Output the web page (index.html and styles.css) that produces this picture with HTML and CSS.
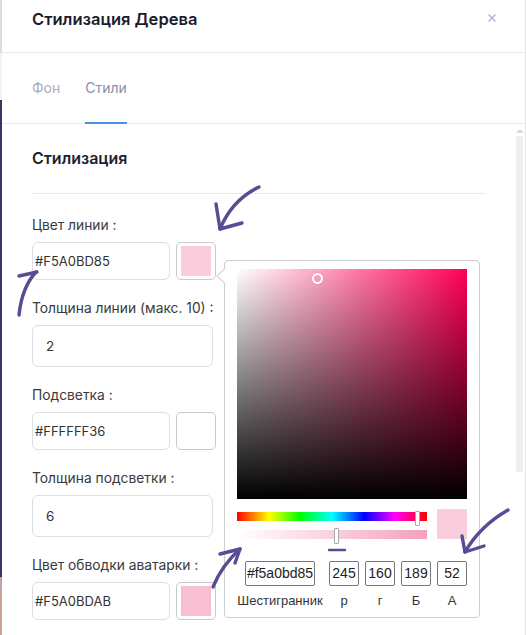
FILE: index.html
```html
<!DOCTYPE html>
<html lang="ru">
<head>
<meta charset="utf-8">
<title>Стилизация Дерева</title>
<link rel="stylesheet" href="styles.css">
</head>
<body>
<div class="page">
  <div class="edge">
    <div class="edge-top"></div>
    <div class="edge-gap"></div>
    <div class="edge-dark"></div>
    <div class="edge-bottom"></div>
  </div>
  <section class="panel">
    <header class="panel-header">
      <h1 class="panel-title">Стилизация Дерева</h1>
      <button class="close" aria-label="Закрыть">
        <svg width="8" height="8" viewBox="0 0 8 8"><path d="M0.5 0.5 L7.5 7.5 M7.5 0.5 L0.5 7.5" stroke="#a9abc8" stroke-width="1.1" fill="none"/></svg>
      </button>
    </header>
    <nav class="tabs">
      <span class="tab">Фон</span>
      <span class="tab tab-active">Стили</span>
    </nav>
    <div class="body">
      <div class="content">
        <h2 class="section-title">Стилизация</h2>
        <div class="divider"></div>

        <div class="field">
          <label class="field-label">Цвет линии :</label>
          <div class="color-row">
            <div class="text-input color-text">#F5A0BD85</div>
            <div class="swatch"><span class="swatch-fill fill-line"></span></div>

            <div class="picker">
              <div class="sat">
                <span class="sat-cursor"></span>
              </div>
              <div class="controls">
                <div class="sliders">
                  <div class="slider hue"><span class="handle hue-handle"></span></div>
                  <div class="slider alpha"><span class="handle alpha-handle"></span></div>
                </div>
                <div class="preview"></div>
              </div>
              <div class="values">
                <div class="val val-hex"><div class="val-input">#f5a0bd85</div><div class="val-label">Шестигранник</div></div>
                <div class="val"><div class="val-input">245</div><div class="val-label">р</div></div>
                <div class="val"><div class="val-input">160</div><div class="val-label">г</div></div>
                <div class="val"><div class="val-input">189</div><div class="val-label">Б</div></div>
                <div class="val"><div class="val-input">52</div><div class="val-label">А</div></div>
              </div>
            </div>
          </div>
        </div>

        <div class="field">
          <label class="field-label">Толщина линии (макс. 10) :</label>
          <div class="text-input num-input">2</div>
        </div>

        <div class="field">
          <label class="field-label">Подсветка :</label>
          <div class="color-row">
            <div class="text-input color-text">#FFFFFF36</div>
            <div class="swatch"><span class="swatch-fill fill-glow"></span></div>
          </div>
        </div>

        <div class="field">
          <label class="field-label">Толщина подсветки :</label>
          <div class="text-input num-input">6</div>
        </div>

        <div class="field">
          <label class="field-label">Цвет обводки аватарки :</label>
          <div class="color-row">
            <div class="text-input color-text">#F5A0BDAB</div>
            <div class="swatch"><span class="swatch-fill fill-avatar"></span></div>
          </div>
        </div>
      </div>
      <div class="scrollbar">
        <span class="scroll-up"></span>
        <span class="scroll-track"></span>
      </div>
    </div>
  </section>

  <svg class="annotations" width="526" height="635" viewBox="0 0 526 635">
    <g fill="none" stroke="#5b4b94" stroke-width="3.4" stroke-linecap="round" stroke-linejoin="round">
      <path d="M259 187 Q232 200 220 229"/>
      <path d="M216 204 L220 229 L242 223"/>
      <path d="M19 315 Q22 287 36 272"/>
      <path d="M19 276 L37 272"/>
      <path d="M213 587 Q222 565 240 549"/>
      <path d="M220 554 L240 549 L235 563"/>
      <path d="M508 510 Q480 526 465 552"/>
      <path d="M462 536 L465 552 L484 546"/>
      <path d="M329 550 L345 550" stroke-width="2.4"/>
    </g>
  </svg>
</div>
</body>
</html>
```

FILE: styles.css
```css
* { box-sizing: border-box; }

html, body {
  margin: 0;
  padding: 0;
}

body {
  width: 526px;
  height: 635px;
  overflow: hidden;
  background: #fff;
  font-family: Inter, "Noto Sans", sans-serif;
  color: #333;
}

.page {
  position: relative;
  display: flex;
  width: 526px;
  height: 635px;
}

/* window edge behind the panel */
.edge {
  width: 2px;
  flex-shrink: 0;
  display: flex;
  flex-direction: column;
}
.edge-top { height: 53px; background: #dcdcdc; }
.edge-gap { height: 47px; background: #f3f3f3; }
.edge-dark { height: 477px; background: #3b3366; }
.edge-bottom { flex: 1; background: #c8a29c; }

.panel {
  flex: 1;
  min-width: 0;
  display: flex;
  flex-direction: column;
  border-right: 1px solid #e4e4e4;
}

.panel-header {
  height: 53px;
  flex-shrink: 0;
  border-bottom: 1px solid #ebebeb;
  display: flex;
  align-items: flex-start;
  justify-content: space-between;
  padding: 8px 29px 0 30px;
}

.panel-title {
  margin: 0;
  font-size: 16.5px;
  line-height: 22px;
  font-weight: 600;
  color: #1b1b2b;
}

.close {
  border: 0;
  background: none;
  padding: 0;
  margin-top: 6px;
  width: 8px;
  height: 8px;
  display: block;
}
.close svg { display: block; }

.tabs {
  height: 71px;
  flex-shrink: 0;
  border-bottom: 1px solid #ebebeb;
  display: flex;
  gap: 25px;
  padding-left: 30px;
}

.tab {
  display: flex;
  align-items: center;
  margin-bottom: -1px;
  border-bottom: 2px solid transparent;
  font-size: 14px;
  color: #a9abc0;
}

.tab-active {
  color: #8a8ea9;
  border-bottom-color: #4d8fe6;
}

.body {
  flex: 1;
  min-height: 0;
  display: flex;
}

.content {
  flex: 1;
  min-width: 0;
  padding: 24px 31px 0 30px;
}

.section-title {
  margin: 0;
  font-size: 16px;
  line-height: 20px;
  font-weight: 600;
  color: #1f1f2f;
}

.divider {
  height: 1px;
  background: #e8e8ec;
  margin: 25px 0 22px;
}

.field + .field { margin-top: 19px; }

.field-label {
  display: block;
  font-size: 13.8px;
  line-height: 18px;
  color: #3a3a3a;
  margin-bottom: 8px;
}

.text-input {
  border: 1px solid #dcdde6;
  border-radius: 6px;
  background: #fff;
  display: flex;
  align-items: center;
  font-size: 13px;
  color: #333;
}

.color-row {
  position: relative;
  display: flex;
  gap: 6px;
}

.color-text {
  width: 138px;
  height: 38px;
  padding-left: 2px;
}

.num-input {
  width: 181px;
  height: 42px;
  padding-left: 13px;
  font-size: 13.5px;
}

.swatch {
  width: 40px;
  height: 38px;
  border: 1px solid #c9c9c9;
  border-radius: 5px;
  padding: 3px 4px;
  background: #fff;
}

.swatch-fill {
  display: block;
  width: 100%;
  height: 100%;
}

.fill-line { background: rgba(245, 160, 189, 0.52); }
.fill-glow { background: rgba(255, 255, 255, 0.21); }
.fill-avatar { background: rgba(245, 160, 189, 0.67); }

/* colour picker popover */
.picker {
  position: absolute;
  left: 192px;
  top: 18px;
  width: 256px;
  z-index: 2;
  background: #fff;
  border: 1px solid #cfcfcf;
  border-radius: 4px;
  padding: 8px 12px;
  font-family: "Liberation Sans", Arial, sans-serif;
}

.picker::before {
  content: "";
  position: absolute;
  left: -6px;
  top: 9px;
  width: 11px;
  height: 11px;
  background: #fff;
  border-left: 1px solid #cfcfcf;
  border-bottom: 1px solid #cfcfcf;
  transform: rotate(45deg);
}

.sat {
  position: relative;
  width: 230px;
  height: 230px;
  background:
    linear-gradient(to top, #000, rgba(0, 0, 0, 0)),
    linear-gradient(to right, #fff, hsl(340, 100%, 50%));
}

.sat-cursor {
  position: absolute;
  left: 75px;
  top: 4px;
  width: 11px;
  height: 11px;
  border: 2px solid #fff;
  border-radius: 50%;
  box-shadow: 0 0 1px rgba(0, 0, 0, 0.3);
}

.controls {
  display: flex;
  gap: 10px;
  margin-top: 10px;
  height: 30px;
}

.sliders {
  width: 190px;
  padding-top: 3px;
  display: flex;
  flex-direction: column;
  gap: 9px;
}

.slider {
  position: relative;
  height: 12px;
}

.hue {
  background: linear-gradient(to right, #f00 0%, #ff0 17%, #0f0 33%, #0ff 50%, #00f 67%, #f0f 83%, #f00 100%);
}

.alpha {
  background: linear-gradient(to right, rgba(245, 160, 189, 0), rgba(245, 160, 189, 1));
}

.handle {
  position: absolute;
  width: 5px;
  background: #fff;
  border: 1px solid #a8a8a8;
  border-radius: 1px;
}

.hue-handle { left: 178px; top: -1px; height: 15px; }
.alpha-handle { left: 97px; top: -2px; height: 16px; }

.preview {
  width: 30px;
  height: 30px;
  background: rgba(245, 160, 189, 0.52);
}

.values {
  display: flex;
  gap: 6px;
  margin-top: 22px;
}

.val {
  width: 30px;
  display: flex;
  flex-direction: column;
  align-items: center;
}

.val-hex { width: 86px; }

.val-input {
  width: 30px;
  height: 25px;
  border: 1px solid #777;
  border-radius: 2px;
  font-size: 14px;
  line-height: 23px;
  text-align: center;
  color: #222;
}

.val-hex .val-input { width: 70px; }

.val-label {
  margin-top: 7px;
  font-size: 13px;
  line-height: 16px;
  color: #333;
  white-space: nowrap;
}

/* scrollbar */
.scrollbar {
  width: 7px;
  margin-right: 2px;
  padding-top: 5px;
  display: flex;
  flex-direction: column;
  align-items: center;
  gap: 3px;
}

.scroll-up {
  width: 0;
  height: 0;
  border-left: 4px solid transparent;
  border-right: 4px solid transparent;
  border-bottom: 4px solid #d8d8d8;
}

.scroll-track {
  width: 7px;
  height: 336px;
  background: #efefef;
}

.annotations {
  position: absolute;
  left: 0;
  top: 0;
  z-index: 5;
  pointer-events: none;
}
```
